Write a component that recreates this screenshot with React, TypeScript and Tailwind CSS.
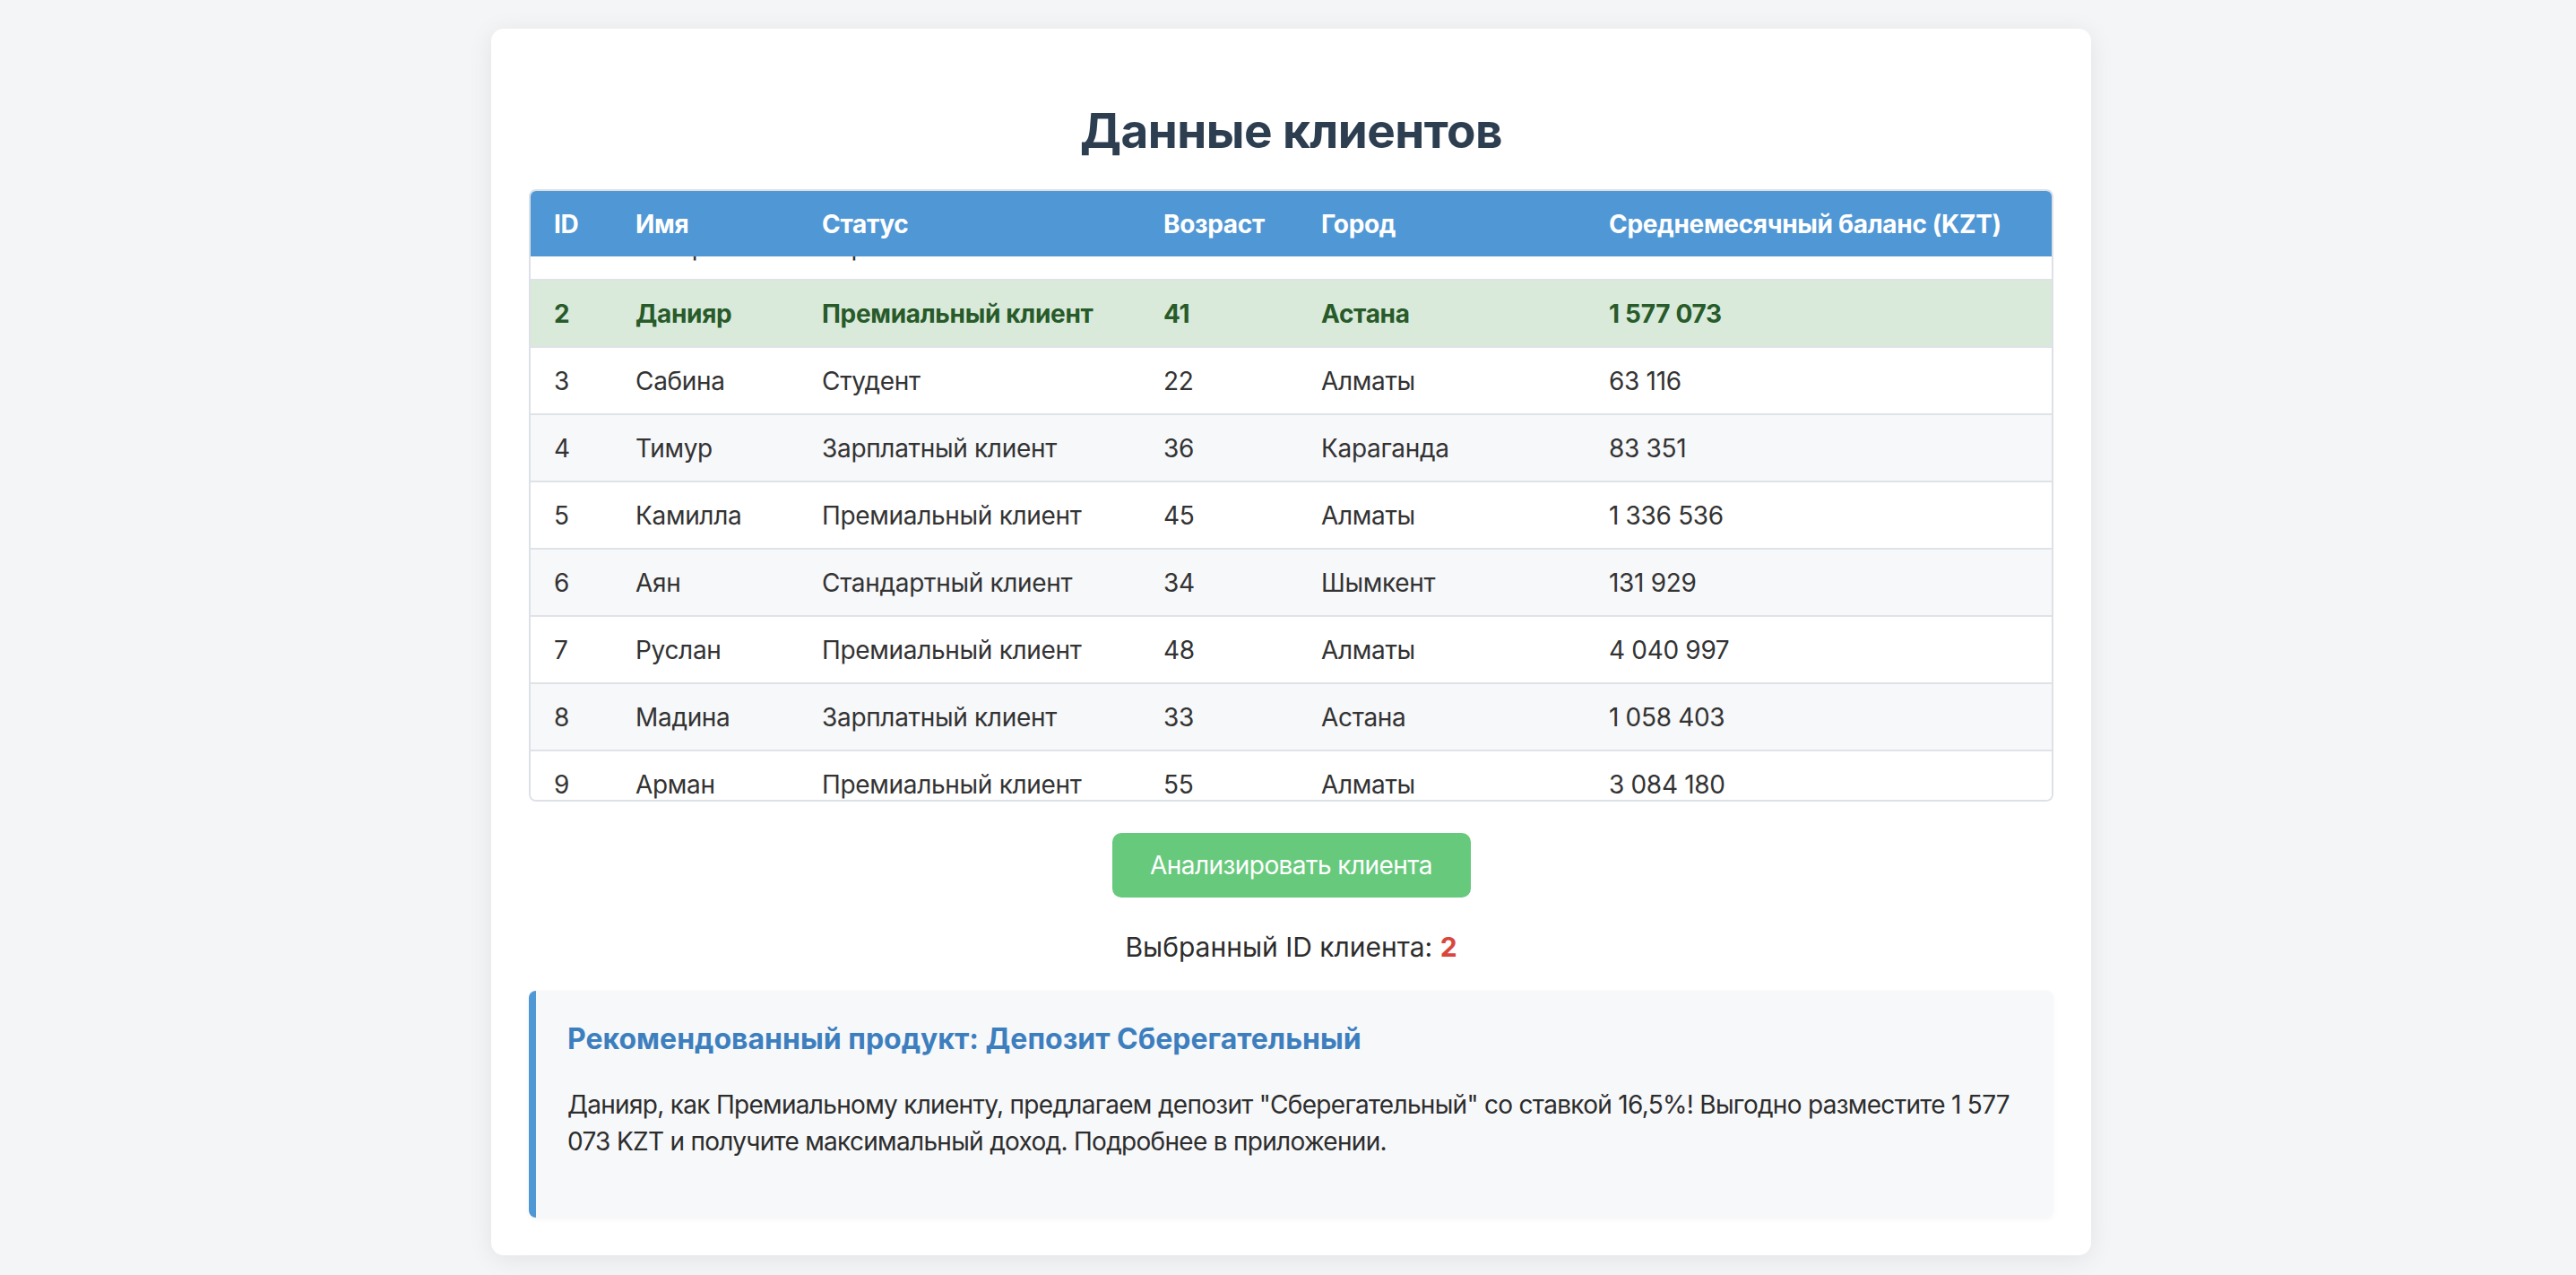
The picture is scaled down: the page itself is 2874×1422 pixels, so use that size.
import { useLayoutEffect, useRef, useState } from 'react';

interface Client {
  id: number;
  name: string;
  status: string;
  age: number;
  city: string;
  balance: number;
}

const clients: Client[] = [
  { id: 1, name: 'Айгерим', status: 'Зарплатный клиент', age: 29, city: 'Алматы', balance: 92843 },
  { id: 2, name: 'Данияр', status: 'Премиальный клиент', age: 41, city: 'Астана', balance: 1577073 },
  { id: 3, name: 'Сабина', status: 'Студент', age: 22, city: 'Алматы', balance: 63116 },
  { id: 4, name: 'Тимур', status: 'Зарплатный клиент', age: 36, city: 'Караганда', balance: 83351 },
  { id: 5, name: 'Камилла', status: 'Премиальный клиент', age: 45, city: 'Алматы', balance: 1336536 },
  { id: 6, name: 'Аян', status: 'Стандартный клиент', age: 34, city: 'Шымкент', balance: 131929 },
  { id: 7, name: 'Руслан', status: 'Премиальный клиент', age: 48, city: 'Алматы', balance: 4040997 },
  { id: 8, name: 'Мадина', status: 'Зарплатный клиент', age: 33, city: 'Астана', balance: 1058403 },
  { id: 9, name: 'Арман', status: 'Премиальный клиент', age: 55, city: 'Алматы', balance: 3084180 },
  { id: 10, name: 'Ержан', status: 'Стандартный клиент', age: 27, city: 'Караганда', balance: 214560 },
];

// group digits with spaces: 1577073 -> "1 577 073"
function formatBalance(n: number) {
  return n.toString().replace(/\B(?=(\d{3})+(?!\d))/g, ' ');
}

export default function App() {
  const [selectedId] = useState(2);
  const scrollRef = useRef<HTMLDivElement>(null);

  // the table is shown scrolled a little, first row under the sticky header
  useLayoutEffect(() => {
    if (scrollRef.current) scrollRef.current.scrollTop = 48;
  }, []);

  const selected = clients.find((c) => c.id === selectedId)!;

  return (
    <div className="min-h-screen bg-[#f4f5f7] pt-[32px] pb-[22px] pl-[7px] font-['Inter',sans-serif] text-[#333]">
      <div className="mx-auto w-[1785px] rounded-[14px] bg-white px-[42px] pb-[42px] shadow-[0_4px_28px_rgba(0,0,0,0.08)]">
        <h1 className="pt-[83px] pb-[34px] text-center text-[53px] leading-[62px] font-bold tracking-[-0.01em] text-[#2c3e50]">
          Данные клиентов
        </h1>

        {/* Table */}
        <div
          ref={scrollRef}
          className="h-[683px] overflow-y-auto rounded-[8px] border-2 border-[#dde1e6] [scrollbar-width:none]"
        >
          <table className="w-full table-fixed border-separate border-spacing-0 text-left tracking-[-0.02em]">
            <colgroup>
              <col className="w-[91px]" />
              <col className="w-[208px]" />
              <col className="w-[381px]" />
              <col className="w-[176px]" />
              <col className="w-[321px]" />
              <col />
            </colgroup>
            <thead>
              <tr className="text-[28px] font-bold text-white">
                <th className="sticky top-0 z-10 h-[73px] bg-[#5097d5] px-[26px]">ID</th>
                <th className="sticky top-0 z-10 h-[73px] bg-[#5097d5] px-[26px]">Имя</th>
                <th className="sticky top-0 z-10 h-[73px] bg-[#5097d5] px-[26px]">Статус</th>
                <th className="sticky top-0 z-10 h-[73px] bg-[#5097d5] px-[26px]">Возраст</th>
                <th className="sticky top-0 z-10 h-[73px] bg-[#5097d5] px-[26px]">Город</th>
                <th className="sticky top-0 z-10 h-[73px] bg-[#5097d5] px-[26px]">Среднемесячный баланс (KZT)</th>
              </tr>
            </thead>
            <tbody className="text-[28px]">
              {clients.map((c, i) => {
                const isSelected = c.id === selectedId;
                const rowClass = isSelected
                  ? 'bg-[#d9eadb] font-bold text-[#285a2a]'
                  : i % 2 === 1
                    ? 'bg-[#f7f8fa]'
                    : 'bg-white';
                return (
                  <tr key={c.id} className={rowClass}>
                    <td className="h-[75px] border-b-2 border-[#dfe3e8] px-[26px]">{c.id}</td>
                    <td className="h-[75px] border-b-2 border-[#dfe3e8] px-[26px]">{c.name}</td>
                    <td className="h-[75px] border-b-2 border-[#dfe3e8] px-[26px]">{c.status}</td>
                    <td className="h-[75px] border-b-2 border-[#dfe3e8] px-[26px]">{c.age}</td>
                    <td className="h-[75px] border-b-2 border-[#dfe3e8] px-[26px]">{c.city}</td>
                    <td className="h-[75px] border-b-2 border-[#dfe3e8] px-[26px]">{formatBalance(c.balance)}</td>
                  </tr>
                );
              })}
            </tbody>
          </table>
        </div>

        {/* Action */}
        <div className="flex flex-col items-center">
          <button className="mt-[35px] h-[72px] w-[400px] rounded-[10px] bg-[#67c97c] text-[28px] tracking-[-0.02em] text-white">
            Анализировать клиента
          </button>
          <p className="mt-[35px] text-[30px] leading-[40px] text-[#2d2d2d]">
            Выбранный ID клиента: <span className="font-bold text-[#d9463b]">{selected.id}</span>
          </p>
        </div>

        {/* Recommendation */}
        <div className="mt-[29px] rounded-[8px] border-l-8 border-[#5097d5] bg-[#f7f8fa] pl-[35px] pr-[30px] pt-[34px] pb-[64px] shadow-[0_2px_6px_rgba(0,0,0,0.04)]">
          <h3 className="text-[32px] leading-[40px] font-bold text-[#3d7fbe]">
            Рекомендованный продукт: Депозит Сберегательный
          </h3>
          <p className="mt-[33px] text-[28px] leading-[41px] tracking-[-0.025em] text-[#2d2d2d]">
            {selected.name}, как Премиальному клиенту, предлагаем депозит "Сберегательный" со ставкой 16,5%! Выгодно
            разместите {formatBalance(selected.balance)} KZT и получите максимальный доход. Подробнее в приложении.
          </p>
        </div>
      </div>
    </div>
  );
}
